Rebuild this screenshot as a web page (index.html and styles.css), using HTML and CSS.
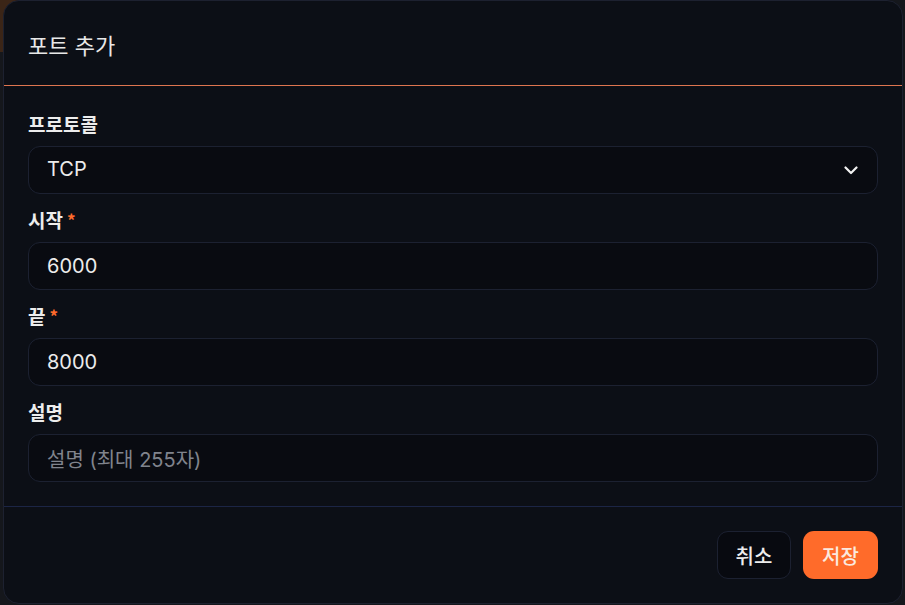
FILE: index.html
```html
<!DOCTYPE html>
<html lang="ko">
<head>
<meta charset="utf-8">
<title>포트 추가</title>
<link rel="stylesheet" href="styles.css">
</head>
<body>
<div class="backdrop">
  <div class="modal">
    <div class="modal-header">
      <h2 class="modal-title">포트 추가</h2>
    </div>
    <div class="modal-body">
      <div class="field">
        <label class="label">프로토콜</label>
        <div class="input select">
          <span class="value">TCP</span>
          <svg class="chevron" width="14" height="9" viewBox="0 0 14 9"><path d="M1.5 1.5 L7 7 L12.5 1.5" fill="none" stroke="#f2f2f2" stroke-width="2.2" stroke-linecap="round" stroke-linejoin="round"/></svg>
        </div>
      </div>
      <div class="field">
        <label class="label">시작<span class="req">*</span></label>
        <div class="input"><span class="value">6000</span></div>
      </div>
      <div class="field">
        <label class="label">끝<span class="req">*</span></label>
        <div class="input"><span class="value">8000</span></div>
      </div>
      <div class="field">
        <label class="label">설명</label>
        <div class="input"><span class="placeholder">설명 (최대 255자)</span></div>
      </div>
    </div>
    <div class="modal-footer">
      <button class="btn btn-cancel">취소</button>
      <button class="btn btn-save">저장</button>
    </div>
  </div>
</div>
</body>
</html>
```

FILE: styles.css
```css
* { box-sizing: border-box; }
html, body {
  margin: 0;
  padding: 0;
  width: 905px;
  height: 605px;
  overflow: hidden;
}
body {
  background: linear-gradient(#3b2517, #3b2517) no-repeat 0 0 / 40px 52px, #15171c;
  font-family: Inter, "Noto Sans CJK KR", sans-serif;
  color: #ececec;
}
.backdrop {
  padding-left: 3px;
}
.modal {
  width: 900px;
  height: 604px;
  background: #0c0f16;
  border: 1px solid #1d2130;
  border-radius: 16px;
  display: flex;
  flex-direction: column;
}
.modal-header {
  height: 85px;
  padding: 0 24px;
  display: flex;
  align-items: center;
  border-bottom: 1px solid #de7550;
}
.modal-title {
  margin: 0;
  padding-top: 1px;
  font-family: "Noto Sans CJK KR", sans-serif;
  font-size: 22px;
  line-height: 28px;
  font-weight: 400;
  color: #e8e8e8;
}
.modal-body {
  padding: 28px 24px 8px;
  display: flex;
  flex-direction: column;
  gap: 16px;
  flex: 1;
}
.field {
  display: flex;
  flex-direction: column;
  gap: 12px;
}
.label {
  font-family: "Noto Sans CJK KR", sans-serif;
  font-size: 19px;
  font-weight: 700;
  line-height: 20px;
  color: #ededed;
  display: flex;
  gap: 4px;
}
.req {
  color: #ff6b2c;
  font-size: 17px;
  line-height: 20px;
}
.input {
  height: 48px;
  border: 1px solid #1c2131;
  border-radius: 12px;
  background: #090b11;
  display: flex;
  align-items: center;
  padding: 0 19px 0 18px;
}
.select {
  justify-content: space-between;
}
.select .value {
  margin-top: -2px;
}
.value {
  font-size: 20px;
  color: #ececec;
}
.placeholder {
  font-size: 20px;
  color: #80848d;
}
.chevron {
  display: block;
}
.modal-footer {
  border-top: 1px solid #1c2545;
  padding: 24px 24px;
  display: flex;
  justify-content: flex-end;
  gap: 12px;
}
.btn {
  height: 48px;
  padding: 0;
  border-radius: 11px;
  font-family: "Noto Sans CJK KR", sans-serif;
  font-size: 20px;
  font-weight: 500;
  cursor: pointer;
}
.btn-cancel {
  width: 74px;
  background: #080a10;
  border: 1px solid #1c2131;
  color: #ededed;
}
.btn-save {
  width: 75px;
  background: #ff6b2a;
  border: none;
  color: #fbe9df;
}
```
